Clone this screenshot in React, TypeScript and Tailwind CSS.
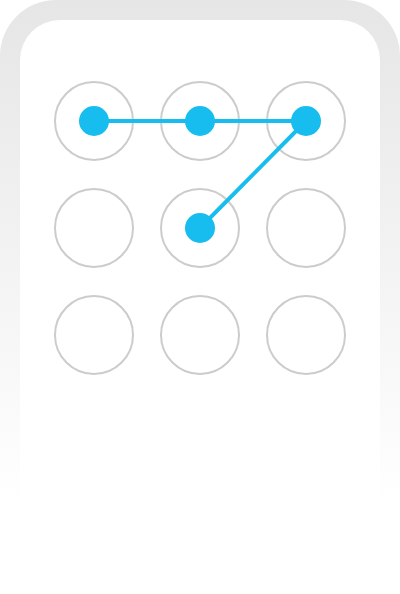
import React from 'react'

// pattern lock: which cells are selected, and the path drawn between them
const selected = [0, 1, 2, 4]
const path = [0, 1, 2, 4]

const CELL = 80
const GAP_X = 26
const GAP_Y = 27

function centerOf(i: number) {
  const col = i % 3
  const row = Math.floor(i / 3)
  return {
    x: col * (CELL + GAP_X) + CELL / 2,
    y: row * (CELL + GAP_Y) + CELL / 2,
  }
}

export default function App() {
  const points = path.map(centerOf).map(p => `${p.x},${p.y}`).join(' ')

  return (
    <div className="w-[400px] h-[594px] rounded-t-[56px] bg-linear-to-b from-[#e6e6e6] to-white to-85% p-5">
      <div className="h-full rounded-[40px] bg-white pt-[61px] flex justify-center">
        <div className="relative self-start">
          <div className="grid grid-cols-3 gap-x-[26px] gap-y-[27px]">
            {Array.from({ length: 9 }).map((_, i) => (
              <div
                key={i}
                className="w-[80px] h-[80px] rounded-full border-2 border-[#cccccc] flex items-center justify-center"
              >
                {selected.includes(i) && <div className="w-[30px] h-[30px] rounded-full bg-[#16bdee]" />}
              </div>
            ))}
          </div>
          <svg className="absolute inset-0 w-full h-full pointer-events-none overflow-visible">
            <polyline points={points} fill="none" stroke="#16bdee" strokeWidth={4} strokeLinejoin="round" />
          </svg>
        </div>
      </div>
    </div>
  )
}
